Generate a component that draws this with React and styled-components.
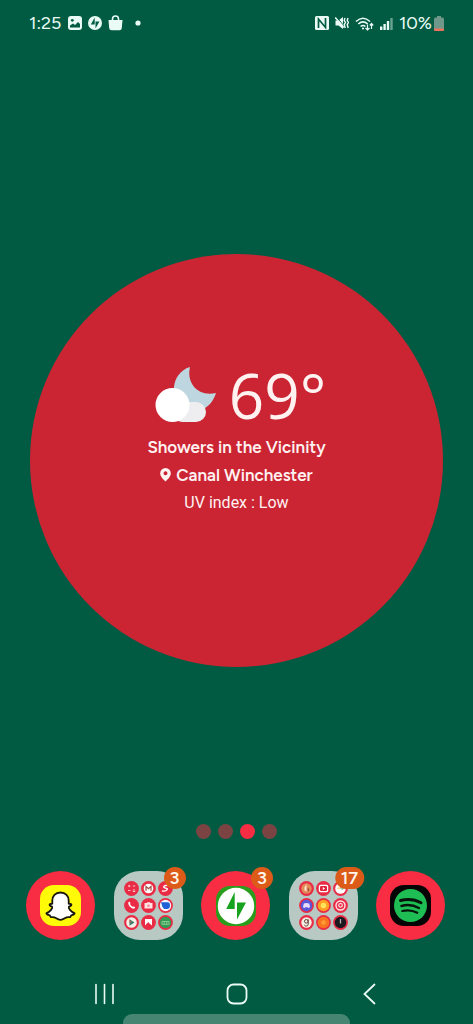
import React from "react";
import styled, { createGlobalStyle } from "styled-components";

const color = {
  green: "#015b43",
  wallpaper: "#cb2534",
  accent: "#f82c42",
  folder: "#b8c9c3",
  badge: "#dc5b18",
  ink: "#e9fbf4",
};

const GlobalStyle = createGlobalStyle`
  *, *::before, *::after { box-sizing: border-box; }
  body {
    margin: 0;
    background: ${color.green};
    font-family: Figtree, Roboto, "Liberation Sans", sans-serif;
  }
  svg { display: block; flex: none; }
`;

const Screen = styled.div`
  min-height: 100vh;
  display: flex;
  flex-direction: column;
  background: ${color.green};
  overflow: hidden;
`;

const StatusBar = styled.header`
  height: 46px;
  padding: 0 29px;
  display: flex;
  align-items: center;
  justify-content: space-between;
  color: ${color.ink};
  font-size: 18px;
  line-height: 20px;
`;

const StatusGroup = styled.div`
  display: flex;
  align-items: center;
  gap: 6px;
`;

const Clock = styled.time`
  margin-right: 1px;
`;

const BatteryLevel = styled.span`
  display: flex;
  align-items: center;
  gap: 2px;
`;

const Wallpaper = styled.main`
  flex: 1;
  display: grid;
  place-items: center;
  padding: 50px 30px 0;
`;

const Disc = styled.div`
  width: 100%;
  aspect-ratio: 1;
  border-radius: 50%;
  background: ${color.wallpaper};
  display: flex;
  justify-content: center;
  padding-top: 26%;
`;

const Weather = styled.section`
  display: flex;
  flex-direction: column;
  align-items: center;
  color: #fff2f1;
`;

const Conditions = styled.div`
  display: flex;
  align-items: center;
  gap: 12px;
  height: 68px;
  margin-bottom: 4px;
  padding-left: 8px;
`;

const Temperature = styled.span`
  font-family: "Open Sans", Roboto, sans-serif;
  font-size: 62px;
  font-weight: 500;
  line-height: 68px;
`;

const Summary = styled.p`
  margin: 0;
  display: flex;
  align-items: center;
  gap: 5px;
  font-size: 17px;
  font-weight: 600;
  line-height: 28px;
`;

const UvIndex = styled.p`
  margin: 0;
  font-family: Roboto, sans-serif;
  font-size: 16px;
  line-height: 27px;
`;

const Pages = styled.nav`
  display: flex;
  justify-content: center;
  gap: 7px;
  padding-bottom: 32px;
`;

const PageDot = styled.button`
  width: 15px;
  height: 15px;
  padding: 0;
  border: 0;
  border-radius: 50%;
  background: ${(p) => (p.$active ? color.accent : "#7b4443")};
`;

const Dock = styled.section`
  display: flex;
  justify-content: space-between;
  padding: 0 28px 34px 26px;
`;

const AppButton = styled.button`
  position: relative;
  width: 69px;
  height: 69px;
  padding: 0;
  border: 0;
  border-radius: 50%;
  background: ${color.accent};
  display: grid;
  place-items: center;
  font-family: inherit;
`;

const FolderButton = styled(AppButton)`
  border-radius: 26px;
  background: ${color.folder};
`;

const FolderGrid = styled.span`
  display: grid;
  grid-template-columns: repeat(3, 15px);
  gap: 2px;
`;

const Badge = styled.span`
  position: absolute;
  top: -4px;
  left: 61px;
  transform: translateX(-50%);
  min-width: 22px;
  height: 22px;
  padding: 0 6px;
  border-radius: 11px;
  background: ${color.badge};
  color: #fff4ec;
  font-size: 18px;
  font-weight: 600;
  line-height: 22px;
  text-align: center;
`;

const SystemNav = styled.nav`
  height: 40px;
  display: flex;
  align-items: center;
  justify-content: space-between;
  padding: 0 92px 0 93px;
`;

const NavButton = styled.button`
  padding: 0;
  border: 0;
  background: none;
  color: ${color.ink};
`;

const PanelHandle = styled.div`
  width: 48%;
  height: 10px;
  align-self: center;
  border-radius: 9px 9px 0 0;
  background: #458571;
`;

const PictureIcon = () => (
  <svg width="14" height="14" viewBox="0 0 14 14" aria-hidden="true">
    <rect width="14" height="14" rx="3" fill={color.ink} />
    <path d="M2 11.5V9.5l3-2 2 1.5 3-3 2 2v3.5z" fill={color.green} />
    <circle cx="4.3" cy="4.3" r="1.4" fill={color.green} />
  </svg>
);

const BoltsIcon = () => (
  <svg width="14" height="14" viewBox="0 0 14 14" aria-hidden="true">
    <circle cx="7" cy="7" r="7" fill={color.ink} />
    <path d="M6.700 1.500v7H2.800zM7.500 12.500V5.500h3.900z" fill={color.green} />
  </svg>
);

const BagIcon = () => (
  <svg width="15" height="16" viewBox="0 0 15 16" aria-hidden="true">
    <path d="M4.500 6V4a3 3 0 0 1 6 0v2" fill="none" stroke={color.ink} strokeWidth="1.600" />
    <path d="M.5 5h14l-.7 8a2.400 2.400 0 0 1-2.400 2.300H3.600A2.400 2.400 0 0 1 1.200 13z" fill={color.ink} />
  </svg>
);

const DotIcon = () => (
  <svg width="18" height="6" viewBox="0 0 18 6" aria-hidden="true">
    <circle cx="9" cy="3" r="2.600" fill={color.ink} />
  </svg>
);

const NfcIcon = () => (
  <svg width="14" height="14" viewBox="0 0 14 14" aria-hidden="true">
    <rect width="14" height="14" rx="1.500" fill={color.ink} />
    <path d="M3.500 12V3l7 8.500V2" fill="none" stroke={color.green} strokeWidth="1.700" />
  </svg>
);

const MuteIcon = () => (
  <svg width="14" height="14" viewBox="0 0 14 14" aria-hidden="true">
    <path d="M.5 4.500h3L8 1v12L3.500 9.500h-3z" fill={color.ink} />
    <path d="M.8.500l8 9" stroke={color.green} strokeWidth="1" />
    <path d="M.3 1.500l8.500 10" stroke={color.ink} strokeWidth="1.300" />
    <path d="M10 2l-.8 2.500 1.300 2-1.300 2 1 3.500M13 2l-.8 2.500 1.300 2-1.300 2 1 3.500" fill="none" stroke={color.ink} strokeWidth="1.400" />
  </svg>
);

const WifiIcon = () => (
  <svg width="19" height="15" viewBox="0 0 19 15" fill="none" stroke={color.ink} aria-hidden="true">
    <path d="M1 5.500q7-6.500 14 0M3.300 8q4.700-4.200 9.400 0M5.600 10.500q2.400-2 4.800 0" strokeWidth="1.600" />
    <circle cx="8" cy="12.500" r="1.100" fill={color.ink} stroke="none" />
    <path d="M12.500 8.500v5.500m-2-2 2 2 2-2M16.500 13V7.500m-1.700 2 1.700-2 1.700 2" strokeWidth="1.200" />
  </svg>
);

const SignalIcon = () => (
  <svg width="13" height="13" viewBox="0 0 13 13" fill={color.ink} aria-hidden="true">
    <path d="M0 9.500h2.400V13H0zM3.400 7h2.400v6H3.400zM6.800 4h2.400v9H6.800z" />
    <path d="M10.300 1h2.400v12h-2.400z" opacity=".45" />
  </svg>
);

const BatteryIcon = () => (
  <svg width="10" height="15" viewBox="0 0 10 15" aria-hidden="true">
    <path d="M3 0h4v1.500h1.500A1.500 1.500 0 0 1 10 3v10.500A1.500 1.500 0 0 1 8.500 15h-7A1.500 1.500 0 0 1 0 13.500V3a1.500 1.500 0 0 1 1.500-1.500H3z" fill="#6f988a" />
    <path d="M0 12.500h10v1A1.500 1.500 0 0 1 8.500 15h-7A1.500 1.500 0 0 1 0 13.500z" fill="#f0705c" />
  </svg>
);

const MoonCloud = () => (
  <svg width="62" height="56" viewBox="0 0 62 56" role="img" aria-label="Cloudy night">
    <path d="M35 0C15 6 14 34 30 42c14 6 27-2 31-16-17 4-30-9-26-26z" fill="#bed6df" />
    <rect x="17" y="35" width="34" height="20" rx="10" fill="#eeeef0" />
    <circle cx="17.500" cy="38" r="17" fill="#fff" />
  </svg>
);

const PinIcon = () => (
  <svg width="11" height="14" viewBox="0 0 11 14" aria-hidden="true">
    <path fillRule="evenodd" d="M5.500 0A5.300 5.300 0 0 0 .2 5.300C.2 8.500 3.500 11.700 5.500 13.500c2-1.800 5.300-5 5.300-8.200A5.300 5.300 0 0 0 5.500 0zm0 3.300a2 2 0 1 1 0 4 2 2 0 0 1 0-4z" fill="#fff2f1" />
  </svg>
);

const SnapIcon = () => (
  <svg width="41" height="41" viewBox="0 0 41 41" aria-hidden="true">
    <rect width="41" height="41" rx="14" fill="#fffb08" />
    <path
      d="M20.500 7.500c-5.200 0-8.200 3.500-8.200 8v3.200c-1 .4-2-.3-2.600.5-.6.900.5 1.600 2.500 2.600.5 1.200-1.700 5-5.700 6.200-.6 1.200 1.600 1.800 3.300 2.300.5.500.2 1.600 1 1.800 1.500.2 3.200-.4 5 .8 1.500 1 2.600 1.900 4.700 1.900s3.200-.9 4.700-1.900c1.800-1.200 3.500-.6 5-.8.8-.2.500-1.300 1-1.800 1.700-.5 3.900-1.100 3.300-2.300-4-1.200-6.200-5-5.700-6.200 2-1 3.100-1.700 2.500-2.600-.6-.8-1.600-.1-2.600-.5v-3.200c0-4.500-3-8-8.200-8z"
      fill="#fff"
      stroke="#17170d"
      strokeWidth="1.800"
      strokeLinejoin="round"
    />
  </svg>
);

const JetpackIcon = () => (
  <svg width="40" height="40" viewBox="0 0 40 40" aria-hidden="true">
    <rect width="40" height="40" rx="14" fill="#2a9e1c" />
    <circle cx="20" cy="20" r="18.200" fill="#fff" />
    <path d="M18.700 6v17h-8.500zM21 33.500v-17h9z" fill="#17a31d" />
  </svg>
);

const SpotifyIcon = () => (
  <svg width="41" height="41" viewBox="0 0 41 41" aria-hidden="true">
    <rect width="41" height="41" rx="14" fill="#050505" />
    <circle cx="20.500" cy="20.500" r="16.500" fill="#1fbe55" />
    <g fill="none" stroke="#06140b" strokeLinecap="round">
      <path d="M10.500 15.500q11-3 20.500 2.200" strokeWidth="3" />
      <path d="M11.500 21q9-2.500 17.500 2" strokeWidth="2.500" />
      <path d="M12.300 26q8-2 15 1.800" strokeWidth="2.200" />
    </g>
  </svg>
);

const miniGlyphs = {
  calculator: <path d="M4 5h2.400M5.200 3.800v2.400M8.800 5h2.400M4 9.500h2.400M8.800 9h2.400M8.800 10.500h2.400" stroke="#ffc0c6" />,
  gmail: (
    <>
      <circle cx="7.500" cy="7.500" r="4.800" fill="#fff" />
      <path d="M5 9.800V5.500l2.500 2.200L10 5.500v4.300" fill="none" stroke="#a3544b" strokeWidth="1.300" />
    </>
  ),
  scribble: <path d="M11 4.500c-4-.8-6 1-5 2s4 .2 3.200 2-3.700 1.700-5.200 1.500" fill="none" stroke="#fff" strokeWidth="1.400" />,
  phone: <path d="M4.600 4c.6-.7 1.200-.4 1.700.8.300.7-.4 1 0 1.700.5.900 1.100 1.500 2 2 .7.400 1-.3 1.700 0 1.200.5 1.500 1.100.8 1.700C8.500 12.400 2.800 6.500 4.600 4z" fill="#fff" />,
  camera: (
    <>
      <path d="M3.500 5h2.200l.6-.8h2.600l.6.8h2v5.500h-8z" fill="#ffe2e4" />
      <circle cx="7.500" cy="7.700" r="1.300" fill="#f58a95" />
    </>
  ),
  messages: (
    <>
      <circle cx="7.500" cy="7.500" r="5.700" fill="#f6f6ff" />
      <path d="M3 4.200h6.500c2 0 2.500 1.300 2.500 3.300s-1 3.500-3 3.500H6.200L4.500 9z" fill="#1f62d8" />
    </>
  ),
  play: (
    <>
      <circle cx="7.500" cy="7.500" r="5.300" fill="#f5efe8" />
      <path d="M5.500 4.300v6.400l5-3.200z" fill="#39806d" />
      <path d="M5.500 4.300v3.200h2z" fill="#d35b43" />
    </>
  ),
  gallery: <path d="M4 4h7v6.500L8.500 8.500 7.300 7 4 10.500z" fill="#fff" />,
  meet: (
    <>
      <circle cx="7.500" cy="7.500" r="5.700" fill="#329b55" />
      <path d="M4 6.500h7v2.800H4zM6.200 6.500v2.800M8.800 6.500v2.800" fill="none" stroke="#9bd39a" strokeWidth=".8" />
    </>
  ),
  tinder: (
    <>
      <circle cx="7.500" cy="7.500" r="5.200" fill="#e28a58" />
      <path d="M7.500 3v7.500l-2-1V6.500z" fill="#ffe9cf" />
      <path d="M8.500 6.500l2 2-1.500 2.200z" fill="#a0423a" />
    </>
  ),
  youtube: (
    <>
      <rect x="2.800" y="3.800" width="9.400" height="7.400" rx="1.800" fill="#fff" />
      <rect x="4" y="5" width="7" height="5" rx="1.200" fill="#e12138" />
      <path d="M6.800 6v3l2.400-1.500z" fill="#fff" />
    </>
  ),
  photos: (
    <>
      <circle cx="7.500" cy="7.500" r="5.300" fill="#fff" />
      <path d="M7.500 7.500V4a2 2 0 0 1 0 3.500z" fill="#e14435" />
      <path d="M7.500 7.500H11a2 2 0 0 1-3.500 0z" fill="#3f9f52" />
      <path d="M7.500 7.500H4a2 2 0 0 1 3.500 0z" fill="#efb32b" />
    </>
  ),
  discord: (
    <>
      <circle cx="7.500" cy="7.500" r="5.800" fill="#5a58d8" />
      <path d="M4.800 5.500q2.700-1 5.400 0l.9 3.800-1.800.7-.6-.8H6.300l-.6.8-1.800-.7z" fill="#eadcf8" />
    </>
  ),
  sun: (
    <>
      <circle cx="7.500" cy="7.500" r="5.800" fill="#ff9f23" />
      <circle cx="7.500" cy="7.500" r="2.800" fill="#ffe45c" />
    </>
  ),
  pinterest: (
    <>
      <circle cx="7.500" cy="7.500" r="4.500" fill="none" stroke="#ffe7e9" strokeWidth="1.400" />
      <circle cx="7.500" cy="7.300" r="1.800" fill="none" stroke="#ffe7e9" strokeWidth="1.200" />
    </>
  ),
  goodreads: (
    <>
      <circle cx="7.500" cy="7.500" r="5.200" fill="#f5eee3" />
      <circle cx="7.300" cy="6.300" r="1.800" fill="none" stroke="#624338" />
      <path d="M9.200 4.300v5c0 2-3 2.300-3.900.8" fill="none" stroke="#624338" />
    </>
  ),
  orange: (
    <>
      <circle cx="7.500" cy="7.500" r="5.800" fill="#f9741f" />
      <circle cx="7.500" cy="7.500" r="2.200" fill="#ff9c38" />
    </>
  ),
  dark: (
    <>
      <circle cx="7.500" cy="7.500" r="5.700" fill="#1b1820" />
      <path d="M7.500 4v4.500" stroke="#b8b0b4" strokeWidth="1.300" />
    </>
  ),
};

const MiniApp = ({ name }) => (
  <svg width="15" height="15" viewBox="0 0 15 15" aria-hidden="true">
    <circle cx="7.500" cy="7.500" r="7.400" fill="#e92b45" />
    {miniGlyphs[name]}
  </svg>
);

const Folder = ({ label, apps, count }) => (
  <FolderButton type="button" aria-label={label}>
    <FolderGrid>
      {apps.map((name) => (
        <MiniApp key={name} name={name} />
      ))}
    </FolderGrid>
    <Badge>{count}</Badge>
  </FolderButton>
);

const everyday = ["calculator", "gmail", "scribble", "phone", "camera", "messages", "play", "gallery", "meet"];
const social = ["tinder", "youtube", "photos", "discord", "sun", "pinterest", "goodreads", "orange", "dark"];

export default function App() {
  return (
    <Screen>
      <GlobalStyle />
      <StatusBar>
        <StatusGroup>
          <Clock>1:25</Clock>
          <PictureIcon />
          <BoltsIcon />
          <BagIcon />
          <DotIcon />
        </StatusGroup>
        <StatusGroup>
          <NfcIcon />
          <MuteIcon />
          <WifiIcon />
          <SignalIcon />
          <BatteryLevel>
            10%
            <BatteryIcon />
          </BatteryLevel>
        </StatusGroup>
      </StatusBar>

      <Wallpaper>
        <Disc>
          <Weather>
            <Conditions>
              <MoonCloud />
              <Temperature>69°</Temperature>
            </Conditions>
            <Summary>Showers in the Vicinity</Summary>
            <Summary>
              <PinIcon />
              Canal Winchester
            </Summary>
            <UvIndex>UV index : Low</UvIndex>
          </Weather>
        </Disc>
      </Wallpaper>

      <Pages aria-label="Home pages">
        {[1, 2, 3, 4].map((page) => (
          <PageDot key={page} type="button" aria-label={`Page ${page}`} $active={page === 3} />
        ))}
      </Pages>

      <Dock aria-label="Dock">
        <AppButton type="button" aria-label="Snapchat">
          <SnapIcon />
        </AppButton>
        <Folder label="Everyday apps" apps={everyday} count={3} />
        <AppButton type="button" aria-label="Jetpack">
          <JetpackIcon />
          <Badge>3</Badge>
        </AppButton>
        <Folder label="Social apps" apps={social} count={17} />
        <AppButton type="button" aria-label="Spotify">
          <SpotifyIcon />
        </AppButton>
      </Dock>

      <SystemNav aria-label="System">
        <NavButton type="button" aria-label="Recent apps">
          <svg width="24" height="24" viewBox="0 0 24 24" stroke="currentColor" strokeWidth="1.600" strokeLinecap="round">
            <path d="M3 2.500v19M11.500 2.500v19M20 2.500v19" />
          </svg>
        </NavButton>
        <NavButton type="button" aria-label="Home">
          <svg width="24" height="24" viewBox="0 0 24 24" fill="none" stroke="currentColor" strokeWidth="1.800">
            <rect x="2.500" y="2.500" width="19" height="19" rx="6" />
          </svg>
        </NavButton>
        <NavButton type="button" aria-label="Back">
          <svg width="24" height="24" viewBox="0 0 24 24" fill="none" stroke="currentColor" strokeWidth="1.800" strokeLinecap="round">
            <path d="M17.500 2.500L7.500 12l10 9.500" />
          </svg>
        </NavButton>
      </SystemNav>
      <PanelHandle />
    </Screen>
  );
}
